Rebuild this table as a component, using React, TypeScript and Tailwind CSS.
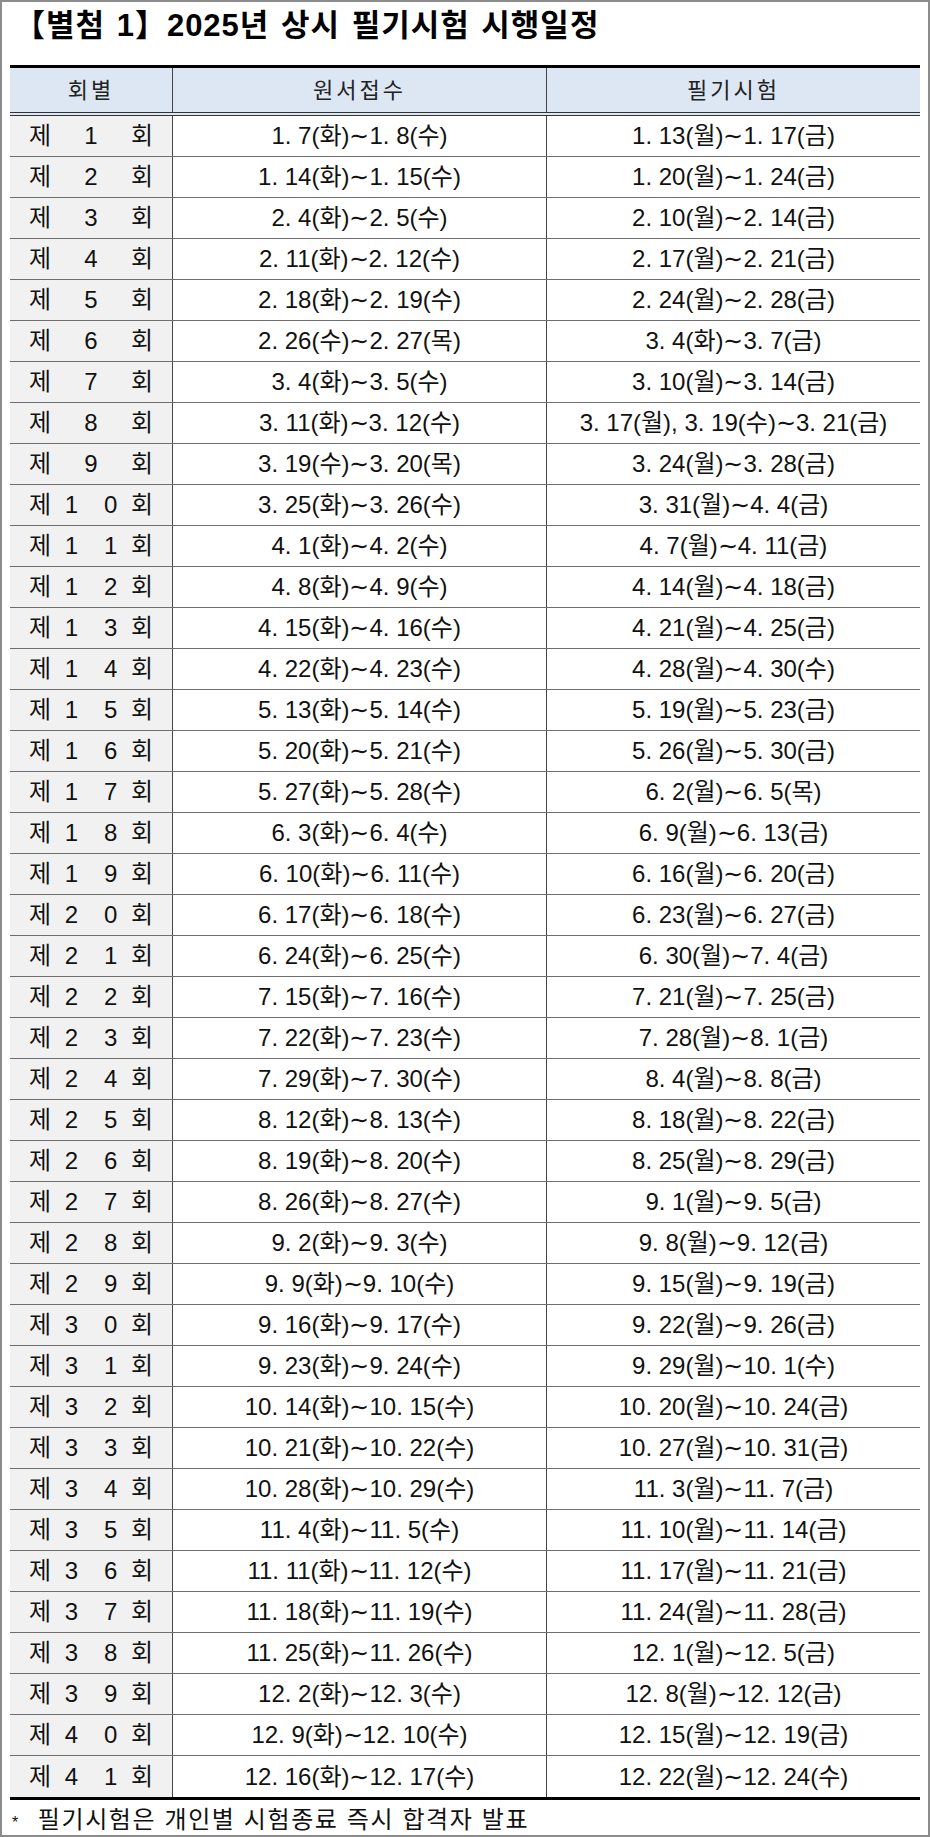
import React from 'react';

const rows: [string, string][] = [
  ['1. 7(화)∼1. 8(수)', '1. 13(월)∼1. 17(금)'],
  ['1. 14(화)∼1. 15(수)', '1. 20(월)∼1. 24(금)'],
  ['2. 4(화)∼2. 5(수)', '2. 10(월)∼2. 14(금)'],
  ['2. 11(화)∼2. 12(수)', '2. 17(월)∼2. 21(금)'],
  ['2. 18(화)∼2. 19(수)', '2. 24(월)∼2. 28(금)'],
  ['2. 26(수)∼2. 27(목)', '3. 4(화)∼3. 7(금)'],
  ['3. 4(화)∼3. 5(수)', '3. 10(월)∼3. 14(금)'],
  ['3. 11(화)∼3. 12(수)', '3. 17(월), 3. 19(수)∼3. 21(금)'],
  ['3. 19(수)∼3. 20(목)', '3. 24(월)∼3. 28(금)'],
  ['3. 25(화)∼3. 26(수)', '3. 31(월)∼4. 4(금)'],
  ['4. 1(화)∼4. 2(수)', '4. 7(월)∼4. 11(금)'],
  ['4. 8(화)∼4. 9(수)', '4. 14(월)∼4. 18(금)'],
  ['4. 15(화)∼4. 16(수)', '4. 21(월)∼4. 25(금)'],
  ['4. 22(화)∼4. 23(수)', '4. 28(월)∼4. 30(수)'],
  ['5. 13(화)∼5. 14(수)', '5. 19(월)∼5. 23(금)'],
  ['5. 20(화)∼5. 21(수)', '5. 26(월)∼5. 30(금)'],
  ['5. 27(화)∼5. 28(수)', '6. 2(월)∼6. 5(목)'],
  ['6. 3(화)∼6. 4(수)', '6. 9(월)∼6. 13(금)'],
  ['6. 10(화)∼6. 11(수)', '6. 16(월)∼6. 20(금)'],
  ['6. 17(화)∼6. 18(수)', '6. 23(월)∼6. 27(금)'],
  ['6. 24(화)∼6. 25(수)', '6. 30(월)∼7. 4(금)'],
  ['7. 15(화)∼7. 16(수)', '7. 21(월)∼7. 25(금)'],
  ['7. 22(화)∼7. 23(수)', '7. 28(월)∼8. 1(금)'],
  ['7. 29(화)∼7. 30(수)', '8. 4(월)∼8. 8(금)'],
  ['8. 12(화)∼8. 13(수)', '8. 18(월)∼8. 22(금)'],
  ['8. 19(화)∼8. 20(수)', '8. 25(월)∼8. 29(금)'],
  ['8. 26(화)∼8. 27(수)', '9. 1(월)∼9. 5(금)'],
  ['9. 2(화)∼9. 3(수)', '9. 8(월)∼9. 12(금)'],
  ['9. 9(화)∼9. 10(수)', '9. 15(월)∼9. 19(금)'],
  ['9. 16(화)∼9. 17(수)', '9. 22(월)∼9. 26(금)'],
  ['9. 23(화)∼9. 24(수)', '9. 29(월)∼10. 1(수)'],
  ['10. 14(화)∼10. 15(수)', '10. 20(월)∼10. 24(금)'],
  ['10. 21(화)∼10. 22(수)', '10. 27(월)∼10. 31(금)'],
  ['10. 28(화)∼10. 29(수)', '11. 3(월)∼11. 7(금)'],
  ['11. 4(화)∼11. 5(수)', '11. 10(월)∼11. 14(금)'],
  ['11. 11(화)∼11. 12(수)', '11. 17(월)∼11. 21(금)'],
  ['11. 18(화)∼11. 19(수)', '11. 24(월)∼11. 28(금)'],
  ['11. 25(화)∼11. 26(수)', '12. 1(월)∼12. 5(금)'],
  ['12. 2(화)∼12. 3(수)', '12. 8(월)∼12. 12(금)'],
  ['12. 9(화)∼12. 10(수)', '12. 15(월)∼12. 19(금)'],
  ['12. 16(화)∼12. 17(수)', '12. 22(월)∼12. 24(수)'],
];

const font = 'font-["Liberation_Sans","Noto_Sans_CJK_KR",sans-serif]';

const Round: React.FC<{ n: number }> = ({ n }) => {
  const digits = String(n).split('');
  return (
    <div className="flex items-center justify-between pl-[19px] pr-[19px]">
      <span>제</span>
      <span className="flex gap-[26px]">
        {digits.map((d, i) => (
          <span key={i}>{d}</span>
        ))}
      </span>
      <span>회</span>
    </div>
  );
};

export default function App() {
  return (
    <div className={`w-[930px] h-[1837px] border-2 border-[#8c8c8c] bg-white text-[#111] ${font}`}>
      <div className="px-[8px]">
        <h1 className="h-[63px] pt-[5px] pl-[4px] text-[31px] font-bold leading-[38px] tracking-[1px] [word-spacing:2px] text-black">
          【별첨 1】2025년 상시 필기시험 시행일정
        </h1>

        <div className="border-t-[3px] border-b-[3px] border-black">
          <div className="grid h-[48px] grid-cols-[163px_374px_373px] border-b-4 border-double border-[#333] bg-[#dde7f3] text-[22px] tracking-[3px] text-[#222]">
            <div className="flex items-center justify-center border-r border-[#444]">회별</div>
            <div className="flex items-center justify-center border-r border-[#444]">원서접수</div>
            <div className="flex items-center justify-center">필기시험</div>
          </div>

          {rows.map(([apply, exam], i) => (
            <div
              key={i}
              className={`grid h-[41px] grid-cols-[163px_374px_373px] text-[24px] leading-none ${
                i < rows.length - 1 ? 'border-b border-[#6e6e6e]' : ''
              }`}
            >
              <div className="flex items-center border-r border-[#444] bg-[#f1f1f1]">
                <div className="w-full">
                  <Round n={i + 1} />
                </div>
              </div>
              <div className="flex items-center justify-center border-r border-[#444]">{apply}</div>
              <div className="flex items-center justify-center">{exam}</div>
            </div>
          ))}
        </div>

        <p className="flex items-center pt-[2px] text-[24px] leading-[30px] tracking-[1.6px]">
          <span className="ml-[2px] mr-[18px] pt-[6px] text-[16px]">*</span>
          <span>필기시험은 개인별 시험종료 즉시 합격자 발표</span>
        </p>
      </div>
    </div>
  );
}
